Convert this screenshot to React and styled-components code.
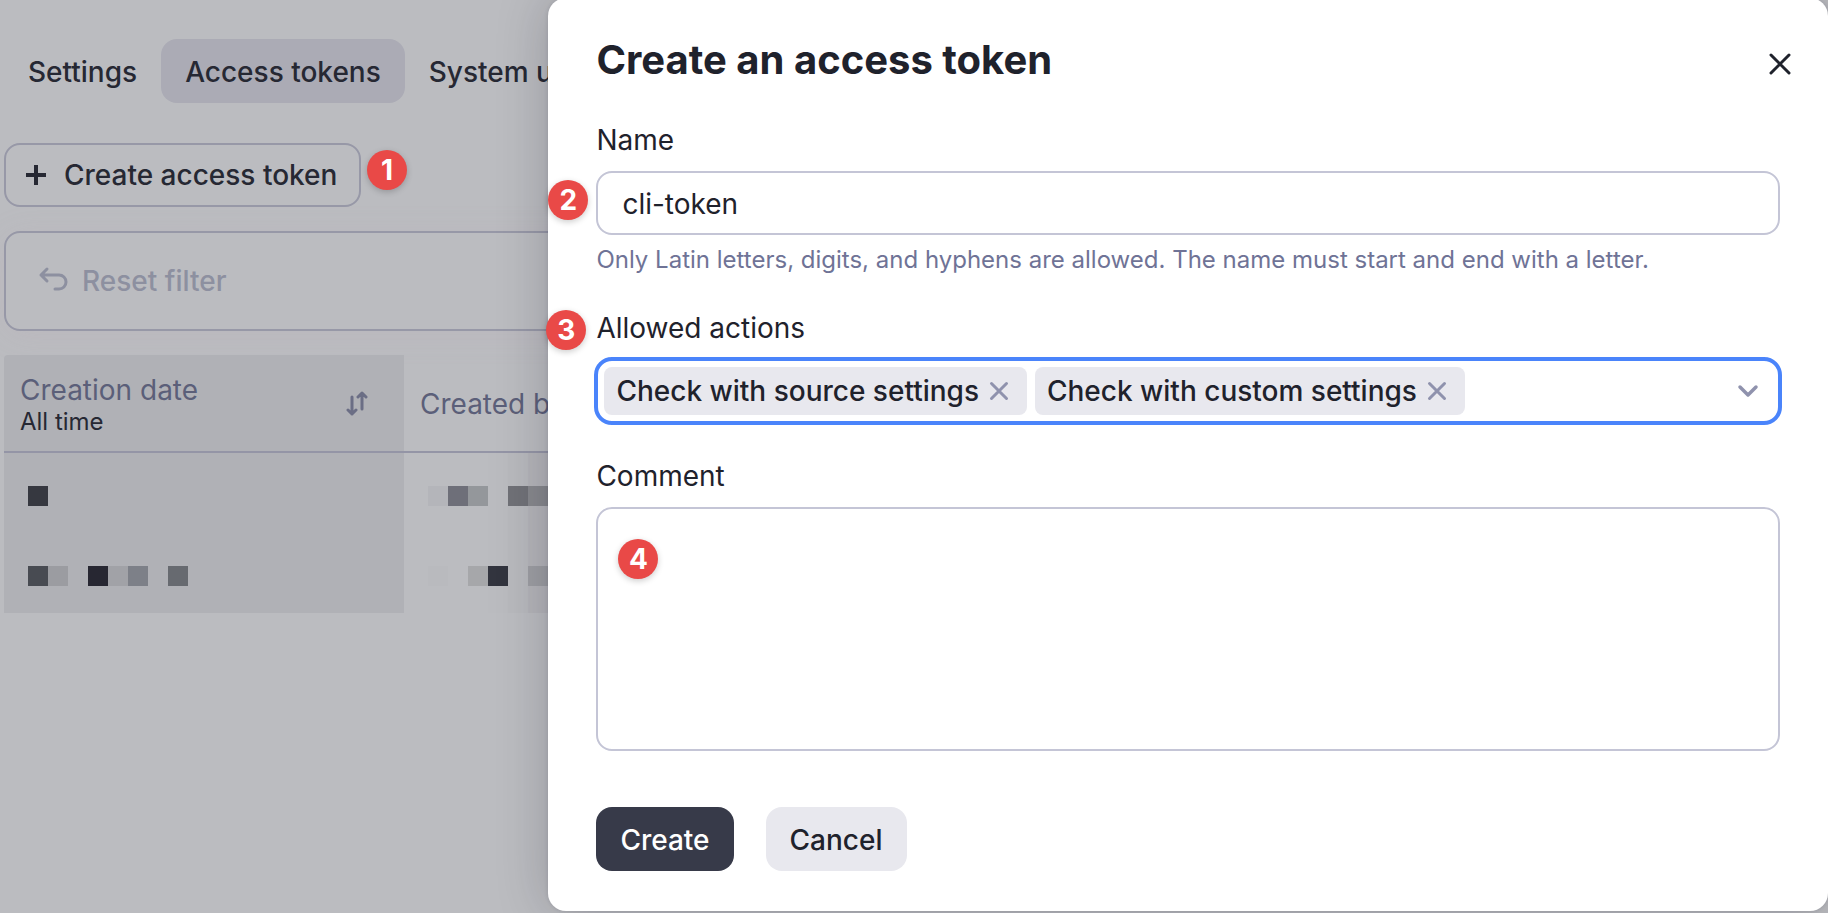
import React from "react";
import styled, { createGlobalStyle } from "styled-components";

const ink = "#1f222c";
const line = "#c4c5d6";

const GlobalStyle = createGlobalStyle`
  * { box-sizing: border-box; }
  html, body { margin: 0; background: #bbbcc0; }
  body, button, input, textarea {
    font-family: Inter, "Liberation Sans", sans-serif;
    font-size: 28px;
    line-height: 36px;
    color: ${ink};
  }
  button { cursor: pointer; }
`;

const Shell = styled.div`
  position: relative;
  min-height: 100vh;
  overflow: hidden;
`;

const Page = styled.main`
  display: flex;
  flex-direction: column;
  gap: 24px;
  padding: 39px 0 0 4px;
  color: #262833;
`;

const Tabs = styled.nav`
  display: flex;
  margin-bottom: 16px;
`;

const Tab = styled.a`
  padding: 15px 24px 13px;
  border-radius: 16px;
  background: ${(p) => (p.$active ? "#ababb5" : "transparent")};
  color: inherit;
  font-weight: 450;
  text-decoration: none;
  white-space: nowrap;
`;

const Toolbar = styled.div`
  position: relative;
  display: flex;
  align-items: center;
`;

const OutlineButton = styled.button`
  display: flex;
  align-items: center;
  gap: 14px;
  height: 64px;
  padding: 0 22px 0 18px;
  border: 2px solid #9798a7;
  border-radius: 16px;
  background: transparent;
  color: #262833;
  font-weight: 450;
`;

const Badge = styled.span`
  display: flex;
  align-items: center;
  justify-content: center;
  width: 40px;
  height: 40px;
  border-radius: 50%;
  background: #e94947;
  box-shadow: 0 2px 6px rgba(0, 0, 0, 0.2);
  color: #fff;
  font-size: 28px;
  line-height: 40px;
  font-weight: 700;
  position: absolute;
  z-index: 1;
  left: ${(p) => p.$x}px;
  top: ${(p) => p.$y}px;
`;

const FilterBar = styled.div`
  display: flex;
  align-items: center;
  height: 100px;
  padding: 0 32px;
  border: 2px solid #9798a7;
  border-radius: 16px;
  box-shadow: 0 4px 32px rgba(190, 160, 175, 0.14);
`;

const ResetButton = styled.button`
  display: flex;
  align-items: center;
  gap: 12px;
  padding: 0;
  border: 0;
  background: transparent;
  color: #8d90a0;
  font-weight: 450;
`;

const Table = styled.table`
  width: 100%;
  border-collapse: separate;
  border-spacing: 0;
  table-layout: fixed;
`;

const Th = styled.th`
  width: ${(p) => (p.$sorted ? "400px" : "auto")};
  height: 98px;
  padding: 2px 16px 0;
  border-bottom: 2px solid #9495a6;
  border-top-left-radius: ${(p) => (p.$sorted ? "4px" : "0")};
  background: ${(p) => (p.$sorted ? "#b0b1b6" : "transparent")};
  color: #5b5f79;
  font-weight: 400;
  text-align: left;
`;

const HeadRow = styled.div`
  display: flex;
  align-items: center;
  justify-content: space-between;
  padding-right: 20px;
`;

const Period = styled.div`
  color: #262833;
  font-size: 24px;
  line-height: 28px;
`;

const Td = styled.td`
  height: 80px;
  padding: 33px 24px 27px;
  background: ${(p) =>
    p.$sorted
      ? "#b0b1b6"
      : "linear-gradient(90deg, transparent 84px, #babbbf 84px, #babbbf 104px, #b8b9bd 104px, #b8b9bd 124px, #b4b4b9 124px)"};
`;

const Mosaic = styled.div`
  display: flex;
  height: 20px;
`;

const Pixel = styled.span`
  width: 20px;
  background: ${(p) => p.$tone || "transparent"};
`;

const Panel = styled.form`
  position: absolute;
  z-index: 2;
  top: -2px;
  right: 0;
  bottom: 2px;
  width: 70%;
  padding: 34px 48px 40px;
  border-radius: 18px;
  background: #fff;
  box-shadow: 0 0 52px rgba(20, 20, 30, 0.22), 0 0 4px rgba(20, 20, 30, 0.12);
`;

const PanelHead = styled.header`
  display: flex;
  align-items: center;
  justify-content: space-between;
  margin: 0 -16px 36px 0;
`;

const Title = styled.h1`
  margin: 0;
  font-size: 40px;
  line-height: 56px;
  font-weight: 700;
`;

const IconButton = styled.button`
  display: flex;
  align-items: center;
  justify-content: center;
  padding: 0;
  border: 0;
  background: transparent;
  color: inherit;
`;

const CloseButton = styled(IconButton)`
  margin-top: 8px;
`;

const Field = styled.div`
  position: relative;
  display: flex;
  flex-direction: column;
  margin-bottom: ${(p) => p.$gap}px;
`;

const Label = styled.label`
  margin-bottom: 15px;
  line-height: 32px;
`;

const TextInput = styled.input`
  width: 100%;
  height: 64px;
  padding: 2px 24px 0;
  border: 2px solid ${line};
  border-radius: 16px;
  background: #fff;
  outline: 0;
`;

const Hint = styled.p`
  margin: 9px 0 0;
  color: #6f7396;
  font-size: 24px;
  line-height: 32px;
`;

const MultiSelect = styled.div`
  display: flex;
  align-items: center;
  gap: 8px;
  height: 68px;
  margin: -2px;
  padding: 0 18px 0 6px;
  border: 4px solid #4a84fb;
  border-radius: 18px;
`;

const Chip = styled.span`
  display: flex;
  align-items: center;
  gap: 8px;
  height: 48px;
  padding: 0 16px 0 12px;
  border-radius: 8px;
  background: #e8e8ee;
  color: ${ink};
  font-weight: 450;
  white-space: nowrap;
`;

const ComboInput = styled.input`
  flex: 1;
  min-width: 0;
  border: 0;
  outline: 0;
  background: transparent;
`;

const TextArea = styled.textarea`
  width: 100%;
  height: 244px;
  padding: 16px 24px;
  border: 2px solid ${line};
  border-radius: 16px;
  background: #fff;
  outline: 0;
  resize: none;
`;

const Actions = styled.footer`
  display: flex;
  gap: 32px;
`;

const Button = styled.button`
  height: 64px;
  padding: 2px 24px 0;
  border: 0;
  border-radius: 16px;
  background: ${(p) => (p.$primary ? "#373a49" : "#e8e8ee")};
  color: ${(p) => (p.$primary ? "#fff" : ink)};
  font-weight: 450;
`;

const Glyph = ({ w, h, d, stroke = 3, color = "currentColor", cap = "round" }) => (
  <svg width={w} height={h} viewBox={`0 0 ${w} ${h}`} fill="none" stroke={color}
    strokeWidth={stroke} strokeLinecap={cap} strokeLinejoin="round" aria-hidden="true">
    <path d={d} />
  </svg>
);

const rows = [
  {
    date: ["#363840"],
    author: ["#b4b5ba", "#6e6f79", "#94979b", "", "#707177", "#87888d"],
  },
  {
    date: ["#484b52", "#9b9ca1", "", "#272732", "#a1a2a7", "#7d8088", "", "#676a70"],
    author: ["#b9babe", "", "#a6a7aa", "#32343e", "", "#9d9ea3"],
  },
];

const Redacted = ({ tones }) => (
  <Mosaic>
    {tones.map((tone, i) => (
      <Pixel key={i} $tone={tone} />
    ))}
  </Mosaic>
);

const actions = ["Check with source settings", "Check with custom settings"];

export default function App() {
  return (
    <Shell>
      <GlobalStyle />
      <Page>
        <Tabs>
          <Tab href="#settings">Settings</Tab>
          <Tab href="#tokens" $active>Access tokens</Tab>
          <Tab href="#users">System users</Tab>
        </Tabs>
        <Toolbar>
          <OutlineButton type="button">
            <Glyph w={26} h={24} d="M12 2v20M2 12h20" stroke={4} cap="butt" />
            Create access token
          </OutlineButton>
          <Badge $x={363} $y={7}>1</Badge>
        </Toolbar>
        <FilterBar>
          <ResetButton type="button">
            <Glyph w={32} h={32} d="M9 4L3 10l6 6M3 10h18a7 7 0 0 1 0 14h-4" />
            Reset filter
          </ResetButton>
        </FilterBar>
        <Table>
          <thead>
            <tr>
              <Th $sorted>
                <HeadRow>
                  <div>
                    Creation date
                    <Period>All time</Period>
                  </div>
                  <Glyph w={22} h={28} d="M6 7v17M2 20l4 4 4-4M16 19V3M12 7l4-4 4 4" color="#6b6e85" />
                </HeadRow>
              </Th>
              <Th>Created by</Th>
            </tr>
          </thead>
          <tbody>
            {rows.map((row, i) => (
              <tr key={i}>
                <Td $sorted><Redacted tones={row.date} /></Td>
                <Td><Redacted tones={row.author} /></Td>
              </tr>
            ))}
          </tbody>
        </Table>
      </Page>

      <Panel onSubmit={(e) => e.preventDefault()}>
        <PanelHead>
          <Title>Create an access token</Title>
          <CloseButton type="button" aria-label="Close">
            <Glyph w={32} h={32} d="M7 7l18 18M25 7L7 25" />
          </CloseButton>
        </PanelHead>

        <Field $gap={36}>
          <Label htmlFor="name">Name</Label>
          <TextInput id="name" defaultValue="cli-token" />
          <Badge $x={-48} $y={56}>2</Badge>
          <Hint>
            Only Latin letters, digits, and hyphens are allowed. The name must start and end with a letter.
          </Hint>
        </Field>

        <Field $gap={37}>
          <Label htmlFor="actions">Allowed actions</Label>
          <Badge $x={-50} $y={-2}>3</Badge>
          <MultiSelect>
            {actions.map((name) => (
              <Chip key={name}>
                {name}
                <IconButton type="button" aria-label={`Remove ${name}`}>
                  <Glyph w={24} h={24} d="M4.5 4.5l15 15M19.5 4.5l-15 15" color="#8f92ad" />
                </IconButton>
              </Chip>
            ))}
            <ComboInput id="actions" role="combobox" aria-expanded="false" />
            <Glyph w={24} h={24} d="M4 8l8 8 8-8" stroke={3.5} color="#8f92ad" />
          </MultiSelect>
        </Field>

        <Field $gap={56}>
          <Label htmlFor="comment">Comment</Label>
          <TextArea id="comment" />
          <Badge $x={22} $y={79}>4</Badge>
        </Field>

        <Actions>
          <Button type="submit" $primary>Create</Button>
          <Button type="button">Cancel</Button>
        </Actions>
      </Panel>
    </Shell>
  );
}
